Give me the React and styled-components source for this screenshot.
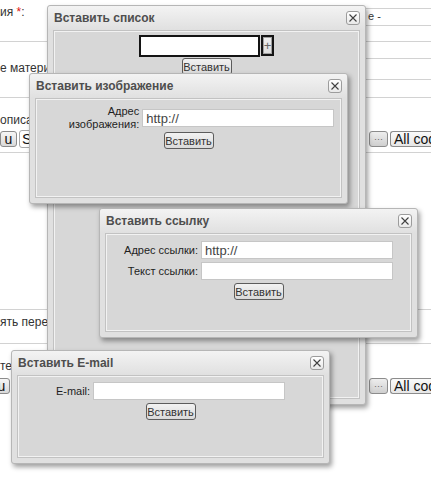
import React from 'react'
import styled, { createGlobalStyle } from 'styled-components'

const LINE = '#d2d2d2'
const PANEL = '#d7d7d7'

const GlobalStyle = createGlobalStyle`
  html, body {
    margin: 0;
    padding: 0;
    background: #fff;
  }
  body {
    font-family: "Liberation Sans", Arial, sans-serif;
    font-size: 12px;
    color: #333;
    overflow: hidden;
  }
`

const Screen = styled.div`
  position: relative;
  width: 431px;
  height: 483px;
  overflow: hidden;
  background: #fff;
`

/* ---------- form page behind the popups ---------- */

const Page = styled.div`
  display: flex;
  flex-direction: column;
`
const Row = styled.div`
  height: ${p => p.$h}px;
  box-sizing: border-box;
  border-bottom: ${p => (p.$line ? `1px solid ${LINE}` : 'none')};
  display: flex;
  flex-direction: ${p => (p.$stack ? 'column' : 'row')};
  justify-content: ${p => (p.$stack ? 'flex-start' : 'space-between')};
`
const LeftCell = styled.div`
  width: ${p => p.$w || 47}px;
  overflow: hidden;
  white-space: nowrap;
`
const RightCell = styled.div`
  width: 65px;
`
const FieldLabel = styled.div`
  margin-top: ${p => p.$top}px;
  line-height: 14px;
  font-size: 12px;
  color: #333;
  white-space: nowrap;
`
const Required = styled.span`
  color: #e01010;
`
const SelectBox = styled.div`
  margin-top: ${p => p.$top}px;
  height: ${p => p.$h}px;
  box-sizing: border-box;
  border-top: 1px solid ${LINE};
  border-bottom: 1px solid ${LINE};
  font-size: 11px;
  line-height: 15px;
  padding-left: 2px;
  color: #333;
`
const Toolbar = styled.div`
  margin-top: ${p => p.$top}px;
  height: 18px;
  display: flex;
  align-items: center;
  justify-content: space-between;
`
const ToolGroup = styled.div`
  display: flex;
  align-items: center;
  gap: 2px;
  margin-left: ${p => p.$shift || 0}px;
`
const RightTools = styled.div`
  width: 65px;
  display: flex;
  align-items: center;
  gap: 2px;
  overflow: hidden;
`
const ToolButton = styled.div`
  height: 16px;
  min-width: ${p => p.$w}px;
  box-sizing: border-box;
  border: 1px solid #8c8c8c;
  border-radius: 3px;
  background: linear-gradient(#f6f6f6, #d9d9d9);
  display: flex;
  align-items: center;
  justify-content: center;
  font-size: 14px;
  color: #111;
  line-height: 14px;
`
const EditorBox = styled.div`
  height: 18px;
  width: 40px;
  box-sizing: border-box;
  border: 1px solid #a8a8a8;
  border-radius: 3px 0 0 3px;
  background: #fff;
  font-size: 15px;
  line-height: 16px;
  padding-left: 2px;
  color: #111;
`
const Separator = styled.div`
  width: 2px;
  height: 16px;
  background: #8a8a8a;
  margin-left: 1px;
`
const Dots = styled(ToolButton)`
  font-size: 9px;
  color: #666;
  background: linear-gradient(#eeeeee, #cfcfcf);
`
const CodeSelect = styled(ToolButton)`
  justify-content: flex-start;
  padding-left: 3px;
  white-space: nowrap;
  overflow: hidden;
  background: linear-gradient(#fafafa, #e6e6e6);
  border-right: none;
  border-radius: 3px 0 0 3px;
`

/* ---------- popup windows ---------- */

const Window = styled.div`
  position: absolute;
  left: ${p => p.$x}px;
  top: ${p => p.$y}px;
  width: 319px;
  height: ${p => p.$h}px;
  box-sizing: border-box;
  display: flex;
  flex-direction: column;
  padding: 0 5px 5px;
  background: #e0e0e0;
  border: 1px solid #b6b6b6;
  border-radius: 3px;
  box-shadow: 2px 3px 5px rgba(0, 0, 0, 0.38);
`
const TitleBar = styled.div`
  height: 24px;
  margin: 0 -5px;
  padding: 0 5px 0 6px;
  display: flex;
  align-items: center;
  justify-content: space-between;
  background: linear-gradient(#f3f3f3, #e0e0e0);
  border-radius: 3px 3px 0 0;
`
const Title = styled.div`
  font-size: 12px;
  font-weight: bold;
  color: #4e4e4e;
`
const CloseButton = styled.div`
  width: 14px;
  height: 14px;
  box-sizing: border-box;
  border: 1px solid #9c9c9c;
  border-radius: 3px;
  background: linear-gradient(#ffffff, #e8e8e8);
  display: flex;
  align-items: center;
  justify-content: center;
`
const Panel = styled.div`
  flex: 1;
  background: ${PANEL};
  border: 1px solid #c2c2c2;
  box-shadow: inset 0 0 0 1px #f2f2f2;
  padding-top: ${p => p.$top}px;
`
const Form = styled.div`
  display: grid;
  grid-template-columns: auto 192px;
  column-gap: 3px;
  row-gap: 3px;
  justify-content: center;
  align-items: center;
  padding-left: ${p => p.$shift || 0}px;
`
const Label = styled.label`
  text-align: right;
  font-size: 11px;
  line-height: 13px;
  color: #1e1e1e;
`
const TextInput = styled.input`
  height: 18px;
  width: 192px;
  box-sizing: border-box;
  margin: 0;
  padding: 0 3px;
  border: 1px solid #c6c6c6;
  background: #fff;
  font-family: "Liberation Sans", Arial, sans-serif;
  font-size: 13px;
  color: #444;
  outline: none;
`
const Actions = styled.div`
  display: flex;
  justify-content: center;
  margin-top: ${p => p.$top}px;
  padding-left: ${p => p.$shift || 0}px;
`
const Button = styled.button`
  height: 17px;
  width: 50px;
  box-sizing: border-box;
  padding: 0;
  border: 1px solid #5c5c5c;
  border-radius: 3px;
  background: linear-gradient(#f2f2f2, #dadada);
  font-family: "Liberation Sans", Arial, sans-serif;
  font-size: 11px;
  color: #333;
`
const ListRow = styled.div`
  display: flex;
  justify-content: center;
  align-items: stretch;
  gap: 1px;
`
const ListInput = styled.div`
  width: 121px;
  height: 22px;
  box-sizing: border-box;
  border: 2px solid #141414;
  background: #fff;
`
const PlusButton = styled.div`
  width: 13px;
  height: 21px;
  box-sizing: border-box;
  border: 2px solid #141414;
  background: linear-gradient(#f0f0f0, #dcdcdc);
  box-shadow: inset 0 0 0 1px #a0a0a0;
  display: flex;
  align-items: center;
  justify-content: center;
  font-size: 13px;
  color: #666;
  line-height: 1;
`

const CloseIcon = () => (
  <svg width="10" height="10" viewBox="0 0 10 10">
    <path d="M1.5 1.5 L8.5 8.5 M8.5 1.5 L1.5 8.5" stroke="#404040" strokeWidth="1.1" />
  </svg>
)

const Popup = ({ x, y, h, title, top, children }) => (
  <Window $x={x} $y={y} $h={h}>
    <TitleBar>
      <Title>{title}</Title>
      <CloseButton>
        <CloseIcon />
      </CloseButton>
    </TitleBar>
    <Panel $top={top}>{children}</Panel>
  </Window>
)

const EditorToolbar = ({ top, shift }) => (
  <Toolbar $top={top}>
    <ToolGroup $shift={shift}>
      <ToolButton $w={17}>u</ToolButton>
      <EditorBox>S</EditorBox>
    </ToolGroup>
    <RightTools>
      <Separator />
      <Dots $w={19}>···</Dots>
      <CodeSelect $w={41}>All cod</CodeSelect>
    </RightTools>
  </Toolbar>
)

export default function App() {
  return (
    <Screen>
      <GlobalStyle />
      <Page>
        <Row $h={42} $line>
          <LeftCell>
            <FieldLabel $top={5}>
              ия <Required>*</Required>:
            </FieldLabel>
          </LeftCell>
          <RightCell>
            <SelectBox $top={8} $h={18}>е -</SelectBox>
          </RightCell>
        </Row>
        <Row $h={56} $line>
          <LeftCell>
            <FieldLabel $top={19}>е материа</FieldLabel>
          </LeftCell>
          <RightCell>
            <SelectBox $top={16} $h={22} />
          </RightCell>
        </Row>
        <Row $h={55} $line $stack>
          <LeftCell $w={29}>
            <FieldLabel $top={15}>описа</FieldLabel>
          </LeftCell>
          <EditorToolbar top={3} />
        </Row>
        <Row $h={157} $line />
        <Row $h={34} $line>
          <LeftCell>
            <FieldLabel $top={5}>ять перев</FieldLabel>
          </LeftCell>
        </Row>
        <Row $h={60} $stack>
          <LeftCell $w={11}>
            <FieldLabel $top={15}>тек</FieldLabel>
          </LeftCell>
          <EditorToolbar top={4} shift={-7} />
        </Row>
      </Page>

      <Popup x={47} y={5} h={400} title="Вставить список" top={4}>
        <ListRow>
          <ListInput />
          <PlusButton>+</PlusButton>
        </ListRow>
        <Actions $top={1}>
          <Button>Вставить</Button>
        </Actions>
      </Popup>

      <Popup x={29} y={73} h={131} title="Вставить изображение" top={6}>
        <Form $shift={26}>
          <Label>
            Адрес
            <br />
            изображения:
          </Label>
          <TextInput defaultValue="http://" />
        </Form>
        <Actions $top={1}>
          <Button>Вставить</Button>
        </Actions>
      </Popup>

      <Popup x={99} y={208} h={130} title="Вставить ссылку" top={7}>
        <Form>
          <Label>Адрес ссылки:</Label>
          <TextInput defaultValue="http://" />
          <Label>Текст ссылки:</Label>
          <TextInput />
        </Form>
        <Actions $top={3}>
          <Button>Вставить</Button>
        </Actions>
      </Popup>

      <Popup x={11} y={350} h={114} title="Вставить E-mail" top={6}>
        <Form>
          <Label>E-mail:</Label>
          <TextInput />
        </Form>
        <Actions $top={3}>
          <Button>Вставить</Button>
        </Actions>
      </Popup>
    </Screen>
  )
}
